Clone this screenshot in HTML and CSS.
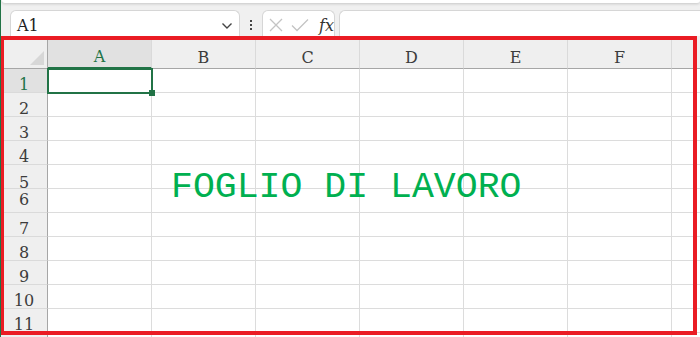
FILE: index.html
```html
<!DOCTYPE html>
<html lang="it">
<head>
    <meta charset="UTF-8">
    <meta name="viewport" content="width=device-width, initial-scale=1.0">
    <title>Foglio di lavoro</title>
    <link rel="stylesheet" href="styles.css">
</head>
<body>
    <div class="app">
        <div class="ribbon-edge"></div>

        <!-- Formula bar -->
        <div class="formula-bar">
            <div class="name-box">
                <span class="name-text">A1</span>
                <svg class="chevron" width="12" height="8" viewBox="0 0 12 8">
                    <path d="M1.5 1.5 L6 6 L10.5 1.5" fill="none" stroke="#444" stroke-width="1.4"/>
                </svg>
            </div>
            <div class="dots">
                <span></span><span></span><span></span>
            </div>
            <div class="fx-box">
                <svg width="14" height="14" viewBox="0 0 14 14">
                    <path d="M1 1 L13 13 M13 1 L1 13" stroke="#c4c4c4" stroke-width="1.3" fill="none"/>
                </svg>
                <svg width="18" height="14" viewBox="0 0 18 14">
                    <path d="M1 7.5 L6 12.5 L17 1.5" stroke="#c4c4c4" stroke-width="1.3" fill="none"/>
                </svg>
                <span class="fx">fx</span>
            </div>
            <div class="formula-input"></div>
        </div>

        <!-- Sheet -->
        <div class="sheet">
            <div class="grid">
                <div class="corner"><span class="tri"></span></div>
                <div class="col-head active">A</div>
                <div class="col-head">B</div>
                <div class="col-head">C</div>
                <div class="col-head">D</div>
                <div class="col-head">E</div>
                <div class="col-head">F</div>
                <div class="col-head"></div>

                <div class="row-head active">1</div>
                <div class="cell selected"></div><div class="cell"></div><div class="cell"></div><div class="cell"></div><div class="cell"></div><div class="cell"></div><div class="cell"></div>
                <div class="row-head">2</div>
                <div class="cell"></div><div class="cell"></div><div class="cell"></div><div class="cell"></div><div class="cell"></div><div class="cell"></div><div class="cell"></div>
                <div class="row-head">3</div>
                <div class="cell"></div><div class="cell"></div><div class="cell"></div><div class="cell"></div><div class="cell"></div><div class="cell"></div><div class="cell"></div>
                <div class="row-head">4</div>
                <div class="cell"></div><div class="cell"></div><div class="cell"></div><div class="cell"></div><div class="cell"></div><div class="cell"></div><div class="cell"></div>
                <div class="row-head low">5</div>
                <div class="cell"></div><div class="cell"></div><div class="cell"></div><div class="cell"></div><div class="cell"></div><div class="cell"></div><div class="cell"></div>
                <div class="row-head high">6</div>
                <div class="cell"></div><div class="cell"></div><div class="cell"></div><div class="cell"></div><div class="cell"></div><div class="cell"></div><div class="cell"></div>
                <div class="row-head">7</div>
                <div class="cell"></div><div class="cell"></div><div class="cell"></div><div class="cell"></div><div class="cell"></div><div class="cell"></div><div class="cell"></div>
                <div class="row-head">8</div>
                <div class="cell"></div><div class="cell"></div><div class="cell"></div><div class="cell"></div><div class="cell"></div><div class="cell"></div><div class="cell"></div>
                <div class="row-head">9</div>
                <div class="cell"></div><div class="cell"></div><div class="cell"></div><div class="cell"></div><div class="cell"></div><div class="cell"></div><div class="cell"></div>
                <div class="row-head">10</div>
                <div class="cell"></div><div class="cell"></div><div class="cell"></div><div class="cell"></div><div class="cell"></div><div class="cell"></div><div class="cell"></div>
                <div class="row-head">11</div>
                <div class="cell"></div><div class="cell"></div><div class="cell"></div><div class="cell"></div><div class="cell"></div><div class="cell"></div><div class="cell"></div>
                <div class="row-head"></div>
                <div class="cell"></div><div class="cell"></div><div class="cell"></div><div class="cell"></div><div class="cell"></div><div class="cell"></div><div class="cell"></div>
            </div>

            <div class="sheet-title">FOGLIO DI LAVORO</div>
            <div class="highlight"></div>
        </div>
    </div>
</body>
</html>
```

FILE: styles.css
```css
html, body {
    margin: 0;
    padding: 0;
}
body {
    background-color: #f0f0f0;
    font-family: "DejaVu Serif", "Liberation Serif", serif;
    color: #333;
}
.app {
    width: 700px;
    height: 337px;
    overflow: hidden;
    border-left: 1px solid #217346;
    box-sizing: border-box;
}
.ribbon-edge {
    height: 3px;
    margin: 0 0 0 1px;
    background-color: #fff;
    border-radius: 0 0 6px 6px;
    box-shadow: 0 1px 3px rgba(0, 0, 0, 0.18);
}

/* formula bar */
.formula-bar {
    height: 26px;
    margin-top: 7px;
    display: flex;
    align-items: stretch;
    padding-left: 9px;
}
.name-box {
    width: 230px;
    background-color: #fff;
    border: 1px solid #d6d6d6;
    border-bottom: none;
    border-radius: 6px 6px 0 0;
    display: flex;
    align-items: center;
    justify-content: space-between;
    padding: 4px 6px 0 6px;
    box-sizing: border-box;
}
.name-text {
    font-size: 16px;
    color: #222;
}
.chevron {
    margin-top: 1px;
}
.dots {
    width: 22px;
    display: flex;
    flex-direction: column;
    align-items: center;
    justify-content: center;
    gap: 2px;
    padding-top: 3px;
}
.dots span {
    width: 2px;
    height: 2px;
    background-color: #444;
}
.fx-box {
    width: 73px;
    background-color: #fff;
    border: 1px solid #d6d6d6;
    border-bottom: none;
    border-radius: 6px 6px 0 0;
    display: flex;
    align-items: center;
    gap: 8px;
    padding: 3px 0 0 6px;
    box-sizing: border-box;
}
.fx {
    font-style: italic;
    font-size: 16px;
    color: #333;
    margin-left: 2px;
}
.formula-input {
    flex: 1;
    margin-left: 4px;
    background-color: #fff;
    border: 1px solid #d6d6d6;
    border-bottom: none;
    border-right: none;
    border-radius: 6px 0 0 0;
}

/* sheet */
.sheet {
    position: relative;
    height: 301px;
    overflow: hidden;
    background-color: #fff;
}
.grid {
    display: grid;
    grid-template-columns: 47px repeat(7, 104px);
    grid-template-rows: 33px repeat(12, 24px);
}
.corner {
    background-color: #efefef;
    border-right: 1px solid #a6a6a6;
    border-bottom: 1px solid #a6a6a6;
    position: relative;
}
.tri {
    position: absolute;
    right: 3px;
    bottom: 3px;
    width: 0;
    height: 0;
    border-left: 14px solid transparent;
    border-bottom: 14px solid #d7d7d7;
}
.col-head {
    background-color: #efefef;
    border-right: 1px solid #dadada;
    border-bottom: 1px solid #a6a6a6;
    display: flex;
    align-items: center;
    justify-content: center;
    padding-top: 10px;
    font-size: 16px;
    color: #3c3c3c;
}
.col-head.active {
    background-color: #e1e1e1;
    color: #217346;
    border-bottom: 2px solid #217346;
}
.row-head {
    background-color: #efefef;
    border-right: 1px solid #a6a6a6;
    border-bottom: 1px solid #dadada;
    display: flex;
    align-items: center;
    justify-content: center;
    padding-top: 7px;
    font-size: 16px;
    color: #3c3c3c;
}
.row-head.active {
    background-color: #e1e1e1;
    color: #217346;
}
.row-head.low {
    padding-top: 11px;
}
.row-head.high {
    padding-top: 0;
    padding-bottom: 2px;
}
.cell {
    border-right: 1px solid #dcdcdc;
    border-bottom: 1px solid #dcdcdc;
}
.cell.selected {
    position: relative;
}
.cell.selected::after {
    content: "";
    position: absolute;
    left: -1px;
    top: -1px;
    right: -2px;
    bottom: -2px;
    border: 2px solid #217346;
}
.cell.selected::before {
    content: "";
    position: absolute;
    right: -4px;
    bottom: -4px;
    width: 6px;
    height: 6px;
    background-color: #217346;
    z-index: 1;
}

.sheet-title {
    position: absolute;
    left: 170px;
    top: 134px;
    font-family: "Liberation Mono", "Courier New", monospace;
    font-size: 36.5px;
    line-height: 36px;
    color: #00b050;
    white-space: nowrap;
}
.highlight {
    position: absolute;
    left: -1px;
    top: 0;
    width: 697px;
    height: 299px;
    border: 4px solid #ea1c24;
    box-sizing: border-box;
}
```
